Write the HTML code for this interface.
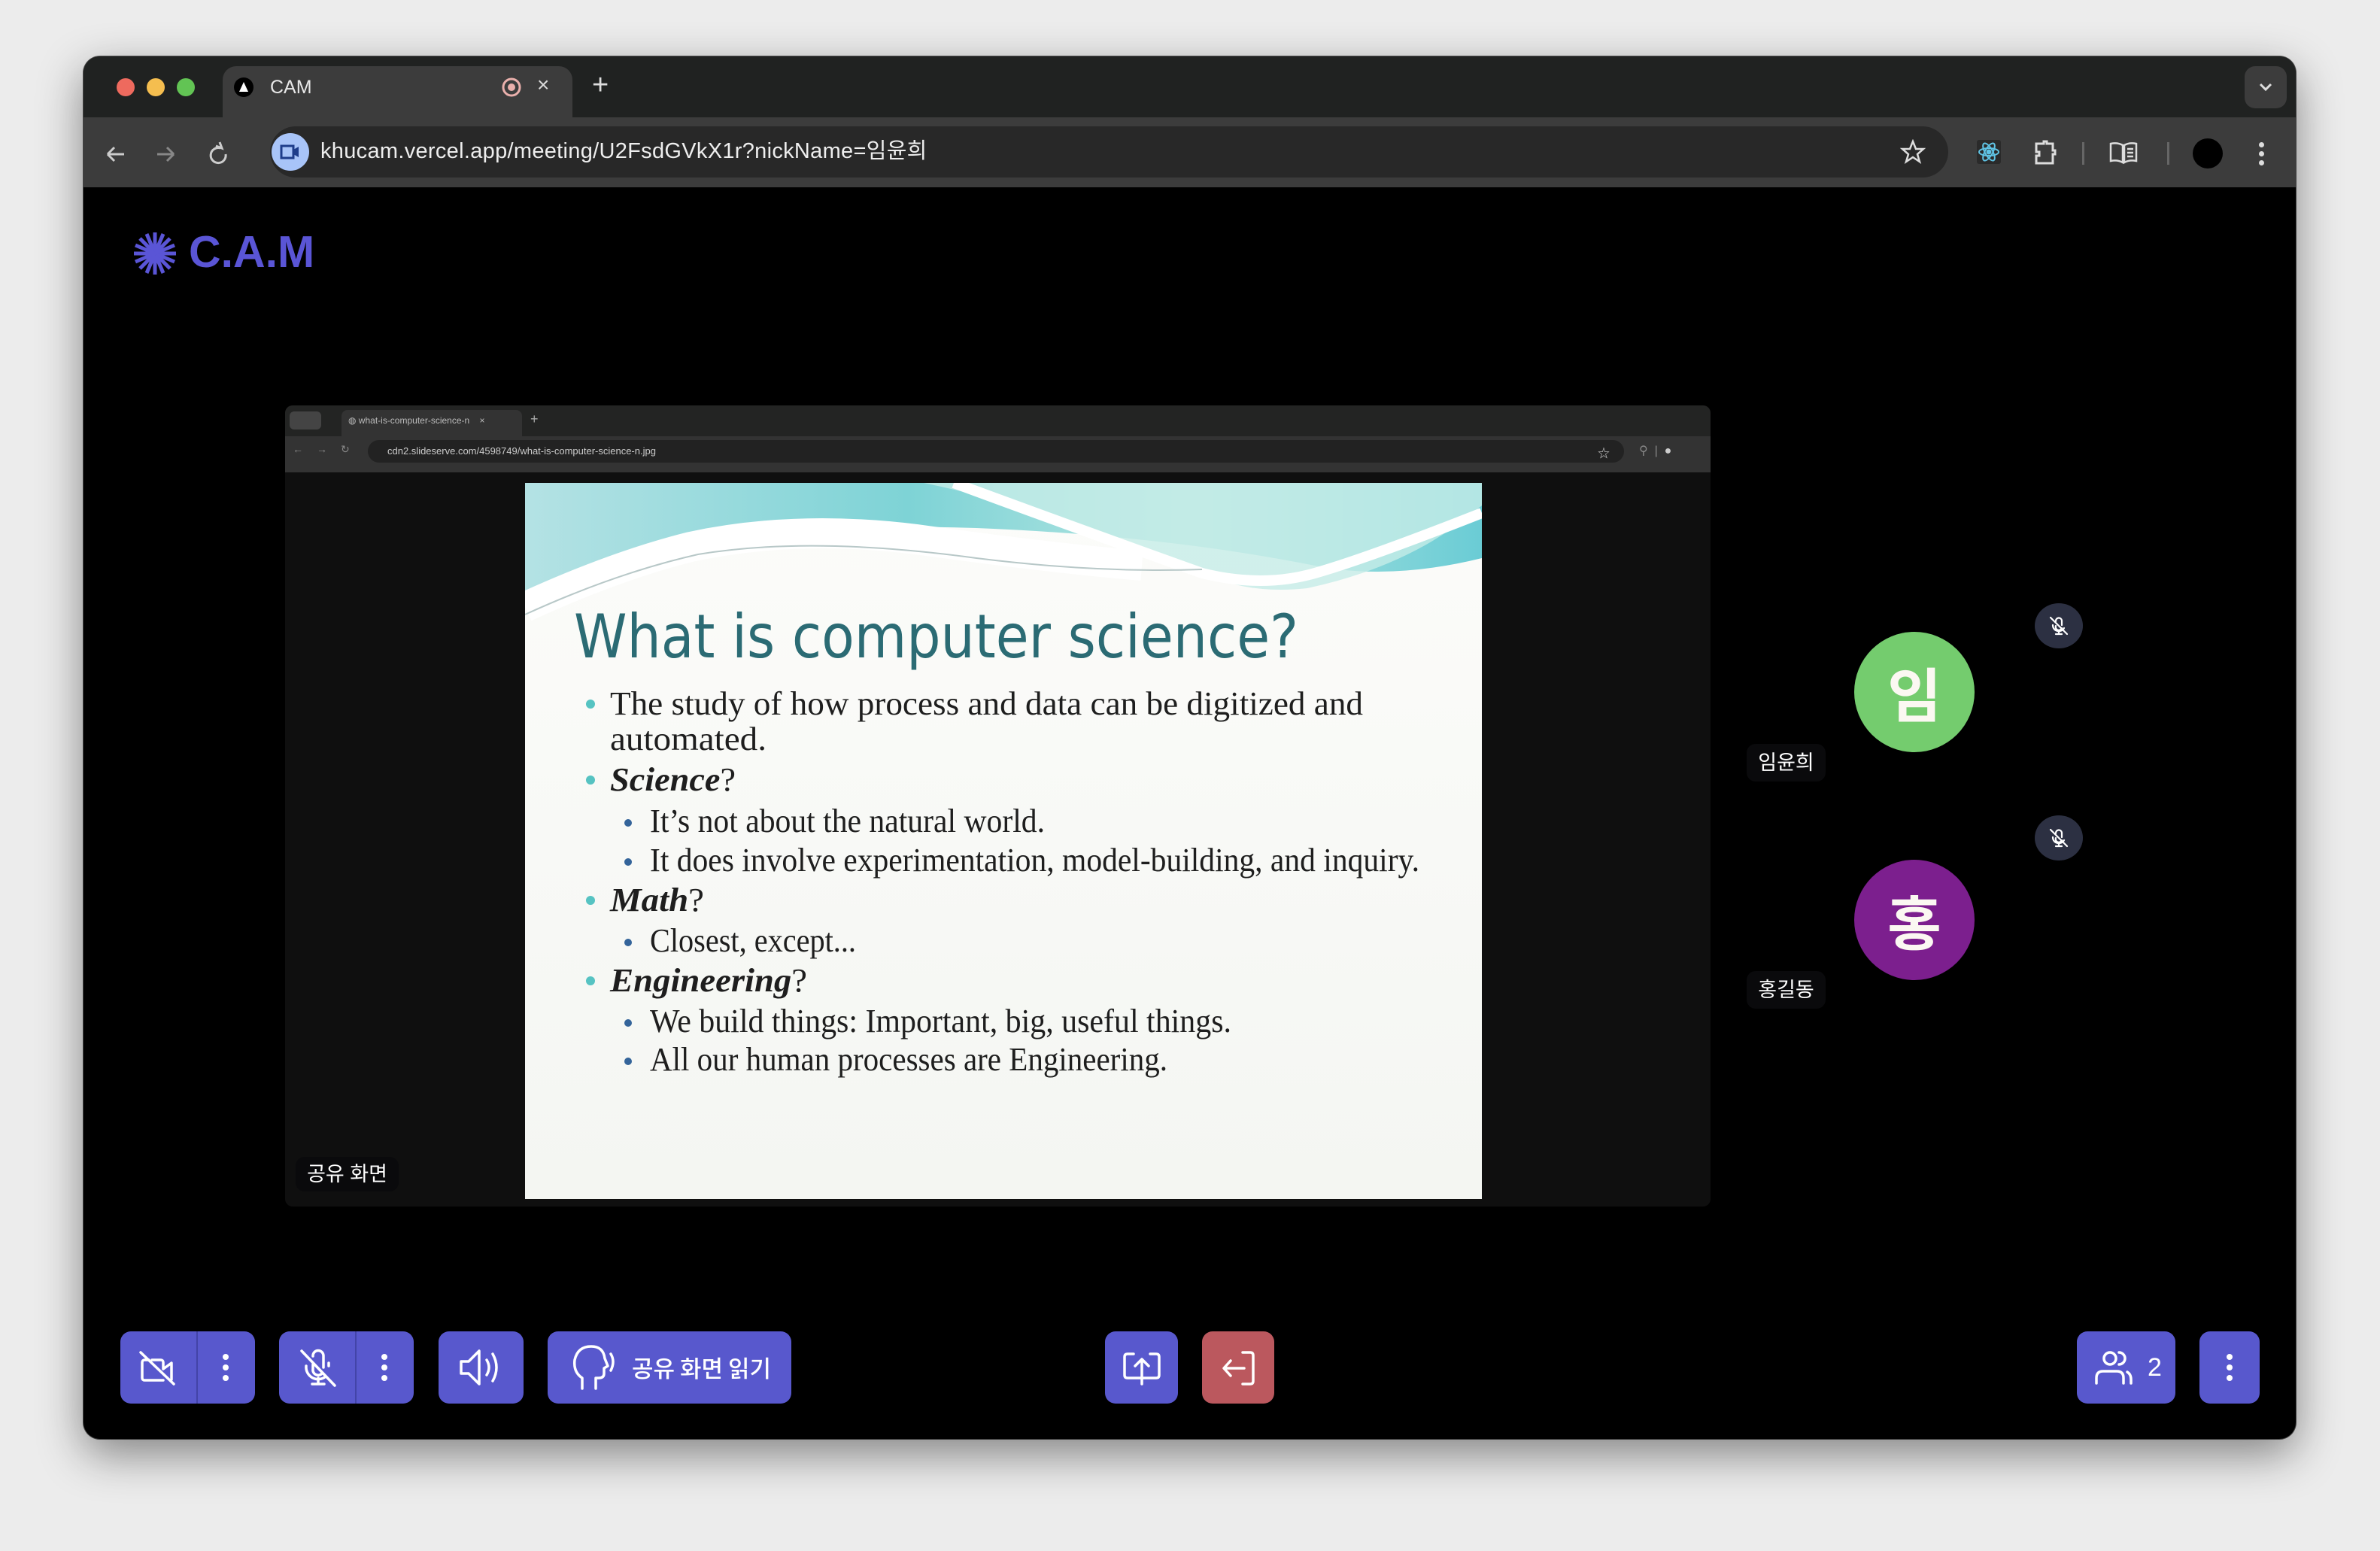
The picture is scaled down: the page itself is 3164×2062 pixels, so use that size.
<!DOCTYPE html>
<html><head><meta charset="utf-8"><style>
*{margin:0;padding:0;box-sizing:border-box}
body{width:3164px;height:2062px;background:#ececec;position:relative;overflow:hidden;font-family:"Liberation Sans","Noto Sans CJK KR",sans-serif}
.abs{position:absolute}
.win{left:111px;top:75px;width:2941px;height:1838px;background:#000;border-radius:22px;overflow:hidden;box-shadow:0 20px 60px rgba(0,0,0,.45),0 0 0 1px #555}
.btn{position:absolute;background:#5858cd;border-radius:14px;top:1770px;height:96px}
.btn svg{position:absolute}
.lbl{position:absolute;background:#0a0a0c;color:#fff;font-size:27px;border-radius:12px;text-align:center;line-height:46px}
</style></head><body>
<div class="abs win">
  <div class="abs" style="left:0;top:0;width:2941px;height:81px;background:#202221"></div>
  <div class="abs" style="left:44px;top:29px;width:24px;height:24px;border-radius:50%;background:#ee6a5e"></div>
  <div class="abs" style="left:84px;top:29px;width:24px;height:24px;border-radius:50%;background:#f5be4f"></div>
  <div class="abs" style="left:124px;top:29px;width:24px;height:24px;border-radius:50%;background:#62c454"></div>
  <div class="abs" style="left:185px;top:13px;width:465px;height:70px;background:#3c3c3c;border-radius:18px 18px 0 0"></div>
  <div class="abs" style="left:200px;top:28px;width:26px;height:26px;border-radius:50%;background:#000"></div>
  <svg class="abs" style="left:200px;top:28px" width="26" height="26"><path d="M13 6 L19 19 L7 19Z" fill="#fff"/></svg>
  <div class="abs" style="left:248px;top:24px;color:#e8e8e8;font-size:25px;line-height:34px">CAM</div>
  <svg class="abs" style="left:555px;top:27px" width="28" height="28"><circle cx="14" cy="14" r="11" fill="none" stroke="#eab0ac" stroke-width="3"/><circle cx="14" cy="14" r="5" fill="#eab0ac"/></svg>
  <div class="abs" style="left:603px;top:22px;color:#ddd;font-size:28px">×</div>
  <div class="abs" style="left:676px;top:17px;color:#ddd;font-size:38px;font-weight:300">+</div>
  <div class="abs" style="left:2873px;top:13px;width:56px;height:56px;border-radius:14px;background:#3c3c3c"></div>
  <svg class="abs" style="left:2889px;top:31px" width="24" height="20"><path d="M5 6 L12 13 L19 6" stroke="#ddd" stroke-width="3" fill="none"/></svg>
  <div class="abs" style="left:0;top:81px;width:2941px;height:93px;background:#3c3c3c"></div>
  <svg class="abs" style="left:24px;top:110px" width="200" height="40">
    <path d="M8 20 H30 M8 20 L17 11 M8 20 L17 29" stroke="#ccc" stroke-width="3" fill="none"/>
    <path d="M96 20 H74 M96 20 L87 11 M96 20 L87 29" stroke="#888" stroke-width="3" fill="none"/>
    <path d="M158 12 A10 10 0 1 0 165 20" stroke="#ccc" stroke-width="3" fill="none"/><path d="M152 9 L160 12 L157 4" stroke="#ccc" stroke-width="3" fill="none"/>
  </svg>
  <div class="abs" style="left:248px;top:93px;width:2231px;height:68px;border-radius:34px;background:#282828"></div>
  <div class="abs" style="left:250px;top:102px;width:50px;height:50px;border-radius:50%;background:#a8c4f8"></div>
  <svg class="abs" style="left:258px;top:112px" width="34" height="30"><rect x="5" y="7" width="16" height="16" fill="none" stroke="#1e3d8a" stroke-width="3"/><path d="M21 12 L28 8 V22 L21 18Z" fill="#1e3d8a"/></svg>
  <div class="abs" style="left:315px;top:107px;color:#eee;font-size:29px;letter-spacing:0.3px;line-height:38px">khucam.vercel.app/meeting/U2FsdGVkX1r?nickName=임윤희</div>
  <svg class="abs" style="left:2415px;top:110px" width="34" height="34"><path d="M17 3 L21 13 L31 13 L23 20 L26 30 L17 24 L8 30 L11 20 L3 13 L13 13Z" fill="none" stroke="#ddd" stroke-width="2.5"/></svg>
  <div class="abs" style="left:2517px;top:111px;width:32px;height:32px;background:#2a2a2a;border-radius:3px"></div>
  <svg class="abs" style="left:2517px;top:111px" width="32" height="32" fill="none" stroke="#5fc3e4" stroke-width="2"><ellipse cx="16" cy="16" rx="13" ry="5"/><ellipse cx="16" cy="16" rx="13" ry="5" transform="rotate(60 16 16)"/><ellipse cx="16" cy="16" rx="13" ry="5" transform="rotate(-60 16 16)"/><circle cx="16" cy="16" r="2.5" fill="#5fc3e4"/></svg>
  <svg class="abs" style="left:2590px;top:108px" width="40" height="40"><path d="M6 8 H16 V5 H20 V8 H28 V17 H31 V22 H28 V34 H6 V24 H10 V19 H6Z" fill="none" stroke="#ddd" stroke-width="3"/></svg>
  <div class="abs" style="left:2657px;top:114px;width:3px;height:30px;background:#666"></div>
  <svg class="abs" style="left:2692px;top:111px" width="40" height="34" fill="none" stroke="#ddd" stroke-width="2.5"><path d="M3 5 Q12 3 19 7 V30 Q12 26 3 28Z M37 5 Q28 3 21 7 V30 Q28 26 37 28Z M25 12 H33 M25 17 H33 M25 22 H33"/></svg>
  <div class="abs" style="left:2770px;top:114px;width:3px;height:30px;background:#666"></div>
  <div class="abs" style="left:2804px;top:109px;width:40px;height:40px;border-radius:50%;background:#000"></div>
  <div class="abs" style="left:2892px;top:114px;width:7px;height:7px;border-radius:50%;background:#ddd;box-shadow:0 12px 0 #ddd,0 24px 0 #ddd"></div>

  <svg class="abs" style="left:65px;top:232px" width="60" height="60" stroke="#5a55d6" stroke-width="5"><g transform="translate(30 30)"><line x1="0" y1="-28" x2="0" y2="28"/><line x1="-28" y1="0" x2="28" y2="0"/><line x1="-20" y1="-20" x2="20" y2="20"/><line x1="-20" y1="20" x2="20" y2="-20"/><line x1="-11" y1="-26" x2="11" y2="26"/><line x1="11" y1="-26" x2="-11" y2="26"/><line x1="-26" y1="-11" x2="26" y2="11"/><line x1="-26" y1="11" x2="26" y2="-11"/></g></svg>
  <div class="abs" style="left:140px;top:225px;color:#5a55d6;font-size:59px;font-weight:bold;line-height:70px">C.A.M</div>

  <div class="abs" style="left:268px;top:464px;width:1895px;height:1065px;background:#0f0f0f;border-radius:10px;overflow:hidden">
    <div class="abs" style="left:0;top:0;width:1895px;height:41px;background:#232423"></div>
    <div class="abs" style="left:6px;top:8px;width:42px;height:24px;background:#444;border-radius:6px"></div>
    <div class="abs" style="left:75px;top:6px;width:240px;height:35px;background:#333;border-radius:8px 8px 0 0"></div>
    <div class="abs" style="left:84px;top:10px;color:#bbb;font-size:12px;line-height:20px">◍ what-is-computer-science-n &nbsp;&nbsp; ×</div>
    <div class="abs" style="left:326px;top:8px;color:#aaa;font-size:18px">+</div>
    <div class="abs" style="left:0;top:41px;width:1895px;height:48px;background:#333"></div>
    <div class="abs" style="left:110px;top:46px;width:1670px;height:30px;background:#222;border-radius:15px"></div>
    <div class="abs" style="left:10px;top:50px;color:#888;font-size:14px;letter-spacing:18px">←→↻</div>
    <div class="abs" style="left:136px;top:52px;color:#ccc;font-size:13px;line-height:18px">cdn2.slideserve.com/4598749/what-is-computer-science-n.jpg</div>
    <div class="abs" style="left:1745px;top:50px;color:#ccc;font-size:16px">☆</div>
    <div class="abs" style="left:1800px;top:50px;color:#888;font-size:16px">⚲ &nbsp;|&nbsp; <span style="color:#ccc">●</span></div>
  </div>
  <div class="lbl" style="left:282px;top:1463px;width:137px;">공유 화면</div>

  <svg class="abs" style="left:587px;top:567px" width="1272" height="952" viewBox="0 0 1272 952">
    <defs>
      <linearGradient id="tg" x1="0" y1="0" x2="1" y2="0"><stop offset="0" stop-color="#b4e2e4"/><stop offset=".4" stop-color="#7ed3d6"/><stop offset=".7" stop-color="#b6e6e1"/><stop offset="1" stop-color="#6accd5"/></linearGradient>
      <linearGradient id="bg" x1="0" y1="0" x2="0" y2="1"><stop offset="0" stop-color="#fcfcfa"/><stop offset="1" stop-color="#f4f6f2"/></linearGradient>
    </defs>
    <rect width="1272" height="952" fill="url(#bg)"/>
    <path d="M0 0 H1272 V100 Q1150 130 1050 110 Q850 70 600 60 Q300 50 120 110 Q40 140 0 150Z" fill="url(#tg)"/>
    <path d="M530 0 Q720 40 880 110 Q950 150 1040 140 Q1180 110 1272 30 V0 Z" fill="#c6ece7" opacity=".8"/>
    <path d="M570 0 Q760 70 900 120 Q980 140 1050 120 Q1120 100 1272 40" stroke="#fff" stroke-width="14" fill="none"/>
    <path d="M0 165 Q120 110 220 85 Q360 55 520 75 Q700 100 820 110" stroke="#fff" stroke-width="40" fill="none"/>
    <path d="M0 175 Q120 120 230 95 Q380 70 600 100 Q760 120 900 115" stroke="#b8c8c8" stroke-width="2" fill="none"/>
    <text x="65" y="232" font-family="'DejaVu Sans','Liberation Sans',sans-serif" font-size="80" fill="#2b6b74" textLength="963" lengthAdjust="spacingAndGlyphs">What is computer science?</text>
    <g font-family="'Liberation Serif',serif" font-size="44" fill="#1e1e1e">
      <g fill="#56c3c2"><circle cx="87" cy="294" r="6"/><circle cx="87" cy="395" r="6"/><circle cx="87" cy="555" r="6"/><circle cx="87" cy="662" r="6"/></g>
      <g fill="#34649a"><circle cx="137" cy="452" r="5"/><circle cx="137" cy="504" r="5"/><circle cx="137" cy="611" r="5"/><circle cx="137" cy="718" r="5"/><circle cx="137" cy="769" r="5"/></g>
      <text x="113" y="308" textLength="1001" lengthAdjust="spacingAndGlyphs">The study of how process and data can be digitized and</text>
      <text x="113" y="355" textLength="208" lengthAdjust="spacingAndGlyphs">automated.</text>
      <text x="113" y="409" textLength="167" lengthAdjust="spacingAndGlyphs"><tspan font-style="italic" font-weight="bold">Science</tspan>?</text>
      <text x="166" y="464" textLength="525" lengthAdjust="spacingAndGlyphs">It’s not about the natural world.</text>
      <text x="166" y="516" textLength="1023" lengthAdjust="spacingAndGlyphs">It does involve experimentation, model-building, and inquiry.</text>
      <text x="113" y="569" textLength="125" lengthAdjust="spacingAndGlyphs"><tspan font-style="italic" font-weight="bold">Math</tspan>?</text>
      <text x="166" y="623" textLength="274" lengthAdjust="spacingAndGlyphs">Closest, except...</text>
      <text x="113" y="676" textLength="262" lengthAdjust="spacingAndGlyphs"><tspan font-style="italic" font-weight="bold">Engineering</tspan>?</text>
      <text x="166" y="730" textLength="773" lengthAdjust="spacingAndGlyphs">We build things: Important, big, useful things.</text>
      <text x="166" y="781" textLength="688" lengthAdjust="spacingAndGlyphs">All our human processes are Engineering.</text>
    </g>
  </svg>

  <div class="abs" style="left:2354px;top:765px;width:160px;height:160px;border-radius:50%;background:#74cc6e;color:#fbf8f2;font-size:78px;font-weight:bold;text-align:center;line-height:160px;font-family:'Noto Sans CJK KR',sans-serif">임</div>
  <div class="abs" style="left:2354px;top:1068px;width:160px;height:160px;border-radius:50%;background:#7c1f8e;color:#fbf8f2;font-size:78px;font-weight:bold;text-align:center;line-height:160px;font-family:'Noto Sans CJK KR',sans-serif">홍</div>
  <div class="lbl" style="left:2211px;top:914px;width:105px;height:50px;line-height:50px">임윤희</div>
  <div class="lbl" style="left:2211px;top:1216px;width:105px;height:50px;line-height:50px">홍길동</div>
  <div class="abs" style="left:2594px;top:727px;width:64px;height:60px;border-radius:50%;background:#2c3042"></div>
  <div class="abs" style="left:2594px;top:1009px;width:64px;height:60px;border-radius:50%;background:#2c3042"></div>
  <svg class="abs" style="left:2610px;top:741px" width="32" height="32" fill="none" stroke="#fff" stroke-width="2.2" stroke-linecap="round"><path d="M12 10 A4 4 0 0 1 20 9 V15 M20 19 A4 4 0 0 1 12 16 M8 15 A8 8 0 0 0 23 19 M16 23 V27 M12 27 H20 M5 5 L27 27"/></svg>
  <svg class="abs" style="left:2610px;top:1023px" width="32" height="32" fill="none" stroke="#fff" stroke-width="2.2" stroke-linecap="round"><path d="M12 10 A4 4 0 0 1 20 9 V15 M20 19 A4 4 0 0 1 12 16 M8 15 A8 8 0 0 0 23 19 M16 23 V27 M12 27 H20 M5 5 L27 27"/></svg>

  <div class="btn" style="left:49px;top:1695px;width:179px">
    <div class="abs" style="left:101px;top:0;width:2px;height:96px;background:#4344a8"></div>
    <svg style="left:24px;top:24px" width="56" height="48" fill="none" stroke="#fff" stroke-width="3.5" stroke-linecap="round" stroke-linejoin="round"><path d="M14 14 H8 A3 3 0 0 0 5 17 V38 A3 3 0 0 0 8 41 H33 M18 14 H30 A3 3 0 0 1 33 17 V26 L44 18 V40 M3 4 L47 46"/></svg>
    <div class="abs" style="left:136px;top:44px;width:8px;height:8px;border-radius:50%;background:#fff;box-shadow:0 14px 0 #fff,0 -14px 0 #fff"></div>
  </div>
  <div class="btn" style="left:260px;top:1695px;width:179px">
    <div class="abs" style="left:101px;top:0;width:2px;height:96px;background:#4344a8"></div>
    <svg style="left:24px;top:20px" width="56" height="56" fill="none" stroke="#fff" stroke-width="3.5" stroke-linecap="round"><path d="M21 13 A7 7 0 0 1 35 12 V28 M33 36 A7 7 0 0 1 21 30 V24 M12 26 A16 16 0 0 0 38 40 M42 26 V22 M28 42 V50 M20 50 H36 M6 6 L50 52"/></svg>
    <div class="abs" style="left:136px;top:44px;width:8px;height:8px;border-radius:50%;background:#fff;box-shadow:0 14px 0 #fff,0 -14px 0 #fff"></div>
  </div>
  <div class="btn" style="left:472px;top:1695px;width:113px">
    <svg style="left:26px;top:20px" width="64" height="56" fill="none" stroke="#fff" stroke-width="3.5" stroke-linecap="round" stroke-linejoin="round"><path d="M4 20 H14 L28 6 V50 L14 36 H4Z M38 18 Q44 28 38 38 M46 10 Q56 28 46 46"/></svg>
  </div>
  <div class="btn" style="left:617px;top:1695px;width:324px">
    <svg style="left:30px;top:16px" width="64" height="64" fill="none" stroke="#fff" stroke-width="3.5" stroke-linecap="round" stroke-linejoin="round"><path d="M16 60 V46 Q4 38 6 22 Q10 4 28 4 Q44 4 46 20 L50 30 L45 33 V40 Q45 46 38 46 H34 V60 M54 14 Q60 24 54 36"/></svg>
    <div class="abs" style="left:112px;top:24px;color:#fff;font-size:31px;line-height:48px;font-family:'Noto Sans CJK KR',sans-serif;font-weight:500">공유 화면 읽기</div>
  </div>
  <div class="btn" style="left:1358px;top:1695px;width:97px">
    <svg style="left:22px;top:24px" width="54" height="50" fill="none" stroke="#fff" stroke-width="3.5" stroke-linecap="round" stroke-linejoin="round"><path d="M16 6 H8 Q4 6 4 10 V34 Q4 38 8 38 H46 Q50 38 50 34 V10 Q50 6 46 6 H38 M27 46 V14 M18 22 L27 13 L36 22"/></svg>
  </div>
  <div class="btn" style="left:1487px;top:1695px;width:96px;background:#bb585e">
    <svg style="left:24px;top:24px" width="50" height="50" fill="none" stroke="#fff" stroke-width="3.5" stroke-linecap="round" stroke-linejoin="round"><path d="M30 4 H40 Q44 4 44 8 V42 Q44 46 40 46 H30 M32 25 H6 M14 15 L5 25 L14 35"/></svg>
  </div>
  <div class="btn" style="left:2650px;top:1695px;width:131px">
    <svg style="left:20px;top:24px" width="60" height="50" fill="none" stroke="#fff" stroke-width="3.5" stroke-linecap="round"><circle cx="24" cy="12" r="8"/><path d="M6 45 V38 Q6 29 15 29 H33 Q42 29 42 38 V45 M36 4 A8 8 0 0 1 36 20 M47 30 Q52 33 52 40 V45"/></svg>
    <div class="abs" style="left:94px;top:24px;color:#fff;font-size:34px;line-height:48px">2</div>
  </div>
  <div class="btn" style="left:2813px;top:1695px;width:80px">
    <div class="abs" style="left:36px;top:44px;width:8px;height:8px;border-radius:50%;background:#fff;box-shadow:0 14px 0 #fff,0 -14px 0 #fff"></div>
  </div>
</div>
</body></html>
